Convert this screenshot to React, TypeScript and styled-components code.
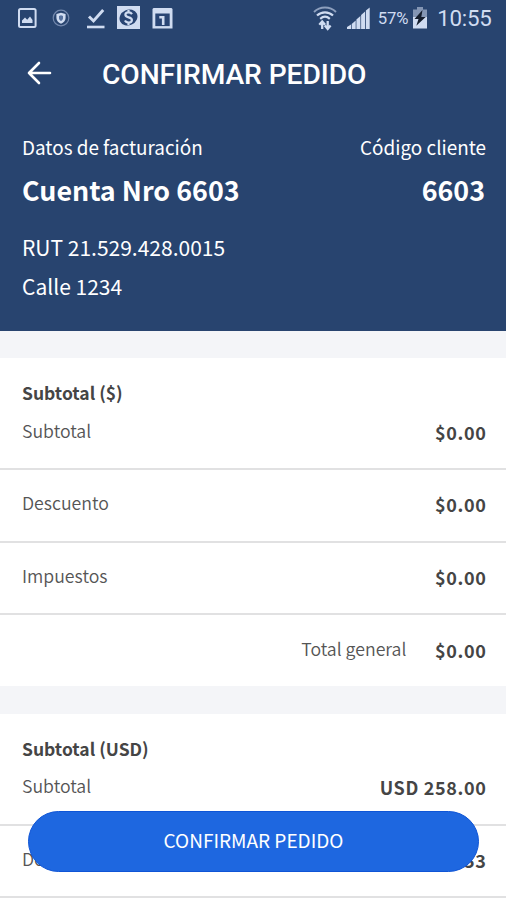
import React from "react";
import styled, { createGlobalStyle } from "styled-components";

const GlobalStyle = createGlobalStyle`
  *, *::before, *::after { box-sizing: border-box; }
  body {
    margin: 0;
    background: #f4f5f8;
    font-family: "Noto Sans CJK SC", "Open Sans", sans-serif;
  }
`;

const Screen = styled.main`
  position: relative;
  width: 506px;
  height: 900px;
  overflow: hidden;
  background: #f4f5f8;
`;

const Header = styled.header`
  height: 331px;
  background: #28446f;
  color: #fff;
`;

const StatusBar = styled.div`
  display: flex;
  justify-content: space-between;
  height: 35px;
  padding: 0 14.5px 0 17px;
  color: #d0dcf1;
  font-family: Roboto, sans-serif;
`;

const StatusGroup = styled.div`
  display: flex;
  align-items: center;
  svg { display: block; flex: none; }
`;

const LeftIcons = styled(StatusGroup)`
  gap: 12px;
`;

const ShieldSlot = styled.span`
  margin: 0 5px 0 3px;
`;

const Percent = styled.span`
  margin: 1px 5px 0 8px;
  font-size: 16.7px;
  letter-spacing: -0.2px;
`;

const Clock = styled.span`
  margin: 1px 0 0 10px;
  font-size: 22.3px;
  letter-spacing: -0.25px;
`;

const SignalSlot = styled.span`
  margin-left: 10px;
`;

const AppBar = styled.div`
  display: flex;
  align-items: center;
  height: 77px;
  padding-left: 26px;
`;

const BackButton = styled.button`
  display: flex;
  width: 26px;
  margin: 0 50px 1px 0;
  padding: 0;
  border: 0;
  background: none;
  color: inherit;
`;

const Title = styled.h1`
  margin: 2px 0 0;
  font: 500 28.2px/36px Roboto, sans-serif;
  letter-spacing: -0.07px;
  white-space: nowrap;
`;

const Billing = styled.section`
  padding: 21px 20px 0 22px;
`;

const Pair = styled.div`
  display: flex;
  justify-content: space-between;
`;

const Caption = styled.span`
  font-size: 18.9px;
  line-height: 28px;
`;

const Account = styled.strong`
  margin: 9px 1px 18px 0;
  font-size: 26.85px;
  line-height: 40px;
  font-weight: 700;
`;

const Detail = styled.p`
  margin: 0 0 1px;
  font-size: 21px;
  line-height: 38px;
`;

const Summary = styled.section`
  margin-top: 27.4px;
  padding-top: 22px;
  background: #fff;
  color: #454545;
  &:last-of-type { padding-bottom: 71px; }
`;

const SummaryTitle = styled.h2`
  margin: 0 0 -9px 22px;
  font-size: 17.5px;
  line-height: 26px;
  font-weight: 700;
`;

const Row = styled.div<{ $total?: boolean }>`
  display: flex;
  align-items: center;
  justify-content: ${(p) => (p.$total ? "flex-end" : "space-between")};
  gap: 28.5px;
  height: ${(p) => (p.$total ? "71px" : "72.7px")};
  padding: 0 19.5px 2px 22px;
  border-bottom: ${(p) => (p.$total ? "0" : "2px solid #e1e1e2")};
`;

const Label = styled.span`
  padding-bottom: 4px;
  color: #555;
  font-size: 17.7px;
  line-height: 26px;
  font-weight: 350;
`;

const Amount = styled.span`
  font-size: 18px;
  line-height: 26px;
  font-weight: 700;
  letter-spacing: 0.65px;
`;

const ConfirmButton = styled.button`
  position: absolute;
  left: 28px;
  top: 811px;
  width: 451px;
  height: 61px;
  padding: 0 0 3px;
  border: 1px solid #0f55d6;
  border-radius: 31px;
  background: #1e67e0;
  color: #fff;
  font: 400 19px/28px "Noto Sans CJK SC", sans-serif;
`;

const PictureIcon = () => (
  <svg width="20" height="22" viewBox="0 0 20 22" fill="none" stroke="currentColor">
    <rect x="2" y="2" width="16.600" height="18" rx="1.500" strokeWidth="2" />
    <path d="M5 16v-2.500l3-3 2.200 2.200 2.800-3.200 2.500 3.500v3z" fill="currentColor" stroke="none" />
  </svg>
);

const ShieldIcon = () => (
  <svg width="18" height="20" viewBox="0 0 18 20" fill="none">
    <circle cx="9" cy="10" r="7.800" stroke="#7388ad" strokeWidth="1.200" />
    <path d="M9 4.700l4.600 1.400v4c0 2.600-2 4.600-4.600 5.600-2.600-1-4.600-3-4.600-5.600v-4z" fill="currentColor" />
    <path d="M9 7.300l2 .7v2.200c0 1.200-.8 2-2 2.700-1.200-.7-2-1.500-2-2.700V8z" fill="#5873a0" />
  </svg>
);

const CheckIcon = () => (
  <svg width="18" height="22" viewBox="0 0 18 22" fill="none" stroke="currentColor">
    <path d="M2 9.500l4.500 4.500L16.200 3" strokeWidth="2.900" />
    <path d="M0 20h17.500" strokeWidth="2.600" />
  </svg>
);

const MoneyIcon = () => (
  <svg width="23" height="23" viewBox="0 0 23 23">
    <rect width="23" height="23" fill="currentColor" />
    <ellipse cx="11.500" cy="11.500" rx="9.200" ry="7.800" fill="#294574" transform="rotate(-25 11.500 11.500)" />
    <path
      d="M15 8.200c-.8-1.300-2-1.800-3.500-1.800-1.900 0-3.100.9-3.100 2.400 0 3.500 6.500 1.600 6.500 5.200 0 1.600-1.400 2.600-3.300 2.600-1.700 0-3-.7-3.700-2M11.500 4v2.400M11.500 16.600V19"
      fill="none"
      stroke="currentColor"
      strokeWidth="2.200"
    />
  </svg>
);

const CalendarIcon = () => (
  <svg width="21" height="22" viewBox="0 0 21 22">
    <path d="M1.500 1h18l1 1v19.500H.5V2z" fill="currentColor" />
    <path d="M3.300 6.500h14.400v12.600H3.300z" fill="#294574" />
    <path d="M7.300 9h5.200v9h-2.600v-6.600H7.300z" fill="currentColor" />
  </svg>
);

const WifiIcon = () => (
  <svg width="24" height="26" viewBox="0 0 24 26" fill="none" stroke="currentColor">
    <path d="M1 7c6-6 16-6 22 0" strokeWidth="1.900" opacity=".6" />
    <path d="M4 10.500c4.500-4.300 11.500-4.300 16 0" strokeWidth="2.200" />
    <path d="M7.200 13.800c2.900-2.500 6.700-2.500 9.600 0" strokeWidth="2.200" />
    <path d="M9.200 24v-7M6.300 19.800l2.900-3.400 2.900 3.400M14.700 16v7.500M11.800 20.500l2.900 3.400 2.900-3.400" strokeWidth="2.300" />
  </svg>
);

const SignalIcon = () => (
  <svg width="23" height="24" viewBox="0 0 23 24" fill="currentColor">
    <path d="M0 23v-2l4-2.500V23zM4.700 23v-5l4-3.500V23zM9.400 23V13.500l4-3.500v13zM14.100 23V9l4-3.500V23zM18.900 23V4.500l3.800-3V23z" />
  </svg>
);

const BatteryIcon = () => (
  <svg width="14" height="23" viewBox="0 0 14 23">
    <path d="M4 1h6v2.500h4V11H0V3.500h4z" fill="#8496b4" />
    <path d="M0 11h14v11.500H0z" fill="currentColor" />
    <path d="M9.500 4L1.500 13h4l-2.200 6.800L12.700 11H8.300z" fill="#151e2d" />
  </svg>
);

const BackArrow = () => (
  <svg width="26" height="24" viewBox="0 0 26 24" fill="none" stroke="currentColor" strokeWidth="2.600" strokeLinecap="round" strokeLinejoin="round">
    <path d="M24 12H3M13 2L3 12l10 10" />
  </svg>
);

type Item = { label: string; value: string; total?: boolean };

const pesos: Item[] = [
  { label: "Subtotal", value: "$0.00" },
  { label: "Descuento", value: "$0.00" },
  { label: "Impuestos", value: "$0.00" },
  { label: "Total general", value: "$0.00", total: true },
];

const dollars: Item[] = [
  { label: "Subtotal", value: "USD 258.00" },
  { label: "Descuento", value: "USD 21.53" },
];

function SummaryBlock({ title, items }: { title: string; items: Item[] }) {
  return (
    <Summary>
      <SummaryTitle>{title}</SummaryTitle>
      {items.map((item) => (
        <Row key={item.label} $total={item.total}>
          <Label>{item.label}</Label>
          <Amount>{item.value}</Amount>
        </Row>
      ))}
    </Summary>
  );
}

export default function App() {
  return (
    <Screen>
      <GlobalStyle />
      <Header>
        <StatusBar>
          <LeftIcons>
            <PictureIcon />
            <ShieldSlot>
              <ShieldIcon />
            </ShieldSlot>
            <CheckIcon />
            <MoneyIcon />
            <CalendarIcon />
          </LeftIcons>
          <StatusGroup>
            <WifiIcon />
            <SignalSlot>
              <SignalIcon />
            </SignalSlot>
            <Percent>57%</Percent>
            <BatteryIcon />
            <Clock>10:55</Clock>
          </StatusGroup>
        </StatusBar>
        <AppBar>
          <BackButton aria-label="Volver">
            <BackArrow />
          </BackButton>
          <Title>CONFIRMAR PEDIDO</Title>
        </AppBar>
        <Billing>
          <Pair>
            <Caption>Datos de facturación</Caption>
            <Caption>Código cliente</Caption>
          </Pair>
          <Pair>
            <Account>Cuenta Nro 6603</Account>
            <Account>6603</Account>
          </Pair>
          <Detail>RUT 21.529.428.0015</Detail>
          <Detail>Calle 1234</Detail>
        </Billing>
      </Header>
      <SummaryBlock title="Subtotal ($)" items={pesos} />
      <SummaryBlock title="Subtotal (USD)" items={dollars} />
      <ConfirmButton>CONFIRMAR PEDIDO</ConfirmButton>
    </Screen>
  );
}
